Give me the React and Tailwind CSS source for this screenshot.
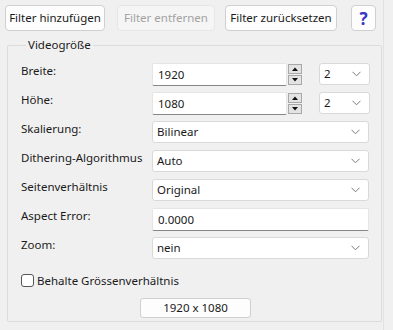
import { useState } from 'react'

const font = { fontFamily: '"Noto Sans", "Open Sans", sans-serif' }

const Chevron = () => (
  <svg width="9" height="6" viewBox="0 0 9 6" className="shrink-0">
    <polyline points="0.5,0.8 4.5,4.8 8.5,0.8" fill="none" stroke="#7a7a7a" strokeWidth="1" />
  </svg>
)

const Combo = ({ value, className = '' }) => (
  <div className={`h-[22px] flex items-center justify-between pl-[4px] pr-[8px] bg-white border border-[#d9d9d9] rounded-[3px] ${className}`}>
    <span>{value}</span>
    <Chevron />
  </div>
)

const TextInput = ({ value, className = '' }) => (
  <div className={`h-[23px] flex items-center pl-[5px] bg-white border border-[#e5e5e5] border-b-[#868686] rounded-[2px] ${className}`}>
    {value}
  </div>
)

const Spinner = () => (
  <div className="flex flex-col gap-[1px] w-[14px] h-[21px] ml-[1px] mt-[1px]">
    <div className="flex-1 flex items-center justify-center bg-[#e3e3e3] border border-[#a8a8a8]">
      <svg width="6" height="4" viewBox="0 0 6 4"><polygon points="0,4 3,0.5 6,4" fill="#111" /></svg>
    </div>
    <div className="flex-1 flex items-center justify-center bg-[#e3e3e3] border border-[#a8a8a8]">
      <svg width="6" height="4" viewBox="0 0 6 4"><polygon points="0,0 3,3.5 6,0" fill="#111" /></svg>
    </div>
  </div>
)

const Row = ({ label, children }) => (
  <div className="flex h-[22px]">
    <div className="w-[131px] shrink-0 leading-[16px]">{label}</div>
    <div className="flex flex-1">{children}</div>
  </div>
)

export default function App() {
  const [keepRatio, setKeepRatio] = useState(false)

  return (
    <div className="w-[393px] h-[330px] bg-[#f0f0f0] text-[11.5px] text-[#1a1a1a] relative overflow-hidden" style={font}>
      {/* Toolbar */}
      <div className="flex pt-[5px] pl-[5px] h-[31px]">
        <button className="w-[100px] h-[26px] bg-[#fdfdfd] border border-[#d0d0d0] rounded-[4px]">Filter hinzufügen</button>
        <button disabled className="ml-[12px] w-[98px] h-[26px] bg-[#f5f5f5] border border-[#e6e6e6] rounded-[4px] text-[#a2a2a2]">Filter entfernen</button>
        <button className="ml-[10px] w-[112px] h-[26px] bg-[#fdfdfd] border border-[#d0d0d0] rounded-[4px]">Filter zurücksetzen</button>
        <button className="ml-[14px] w-[25px] h-[26px] bg-[#fdfdfd] border border-[#d0d0d0] rounded-[4px] text-[#3a33c8] font-bold text-[17px] leading-none">?</button>
      </div>

      {/* Group box */}
      <fieldset className="mt-[6px] ml-[7px] w-[374px] h-[285px] border border-[#dcdcdc] rounded-[2px] pl-[13px] pr-[11px] pt-[10px]">
        <legend className="ml-[5px] px-[2px] leading-[16px]">Videogröße</legend>
        <div className="flex flex-col gap-[7px]">
          <Row label="Breite:">
            <TextInput value="1920" className="w-[135px]" />
            <Spinner />
            <Combo value="2" className="ml-[17px] w-[51px]" />
          </Row>
          <Row label="Höhe:">
            <TextInput value="1080" className="w-[135px]" />
            <Spinner />
            <Combo value="2" className="ml-[17px] w-[51px]" />
          </Row>
          <Row label="Skalierung:">
            <Combo value="Bilinear" className="w-[217px]" />
          </Row>
          <Row label="Dithering-Algorithmus">
            <Combo value="Auto" className="w-[217px]" />
          </Row>
          <Row label="Seitenverhältnis">
            <Combo value="Original" className="w-[217px]" />
          </Row>
          <Row label="Aspect Error:">
            <TextInput value="0.0000" className="w-[217px]" />
          </Row>
          <Row label="Zoom:">
            <Combo value="nein" className="w-[217px]" />
          </Row>
        </div>

        <label className="flex items-center mt-[15px] h-[13px] cursor-pointer">
          <input
            type="checkbox"
            checked={keepRatio}
            onChange={(e) => setKeepRatio(e.target.checked)}
            className="appearance-none w-[13px] h-[13px] bg-white border border-[#555555] rounded-[3px]"
          />
          <span className="ml-[3px]">Behalte Grössenverhältnis</span>
        </label>

        <div className="flex justify-center mt-[11px]">
          <button className="w-[111px] h-[20px] bg-[#fdfdfd] border border-[#d0d0d0] rounded-[3px] leading-none">1920 x 1080</button>
        </div>
      </fieldset>

      {/* right edge of the scroll pane */}
      <div className="absolute top-0 bottom-0 left-[383px] w-[1px] bg-[#e2e2e2]" />
    </div>
  )
}
